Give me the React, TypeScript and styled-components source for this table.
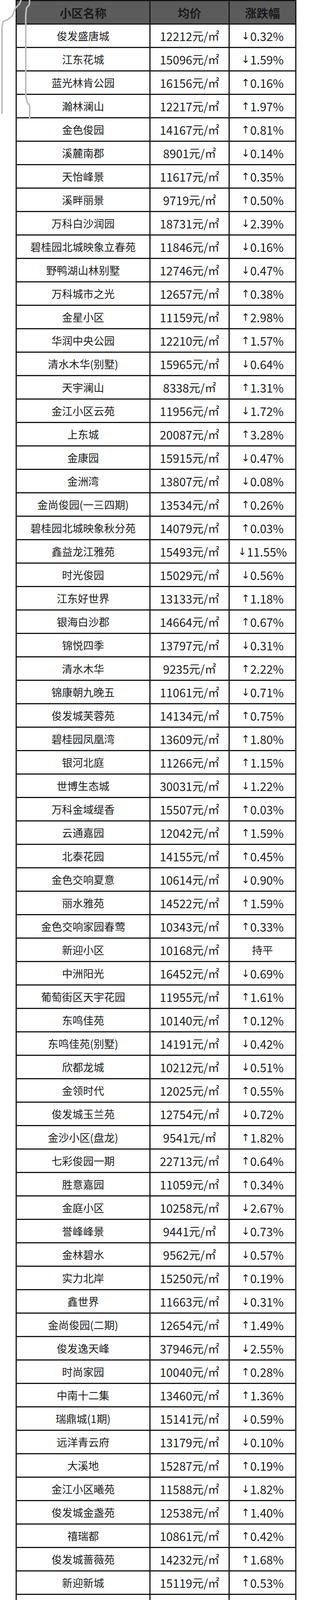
import styled, { createGlobalStyle } from 'styled-components';

const GlobalStyle = createGlobalStyle`
  *, *::before, *::after {
    box-sizing: border-box;
  }
  html, body {
    margin: 0;
    padding: 0;
    background: #ffffff;
  }
  body {
    font-family: "Noto Sans CJK SC", "Noto Sans", sans-serif;
    color: #1c1c1c;
  }
`;

// name, price, change (0 = 持平)
const rows: [string, number, number][] = [
  ['俊发盛唐城', 12212, -0.32],
  ['江东花城', 15096, -1.59],
  ['蓝光林肯公园', 16156, 0.16],
  ['瀚林澜山', 12217, 1.97],
  ['金色俊园', 14167, 0.81],
  ['溪麓南郡', 8901, -0.14],
  ['天怡峰景', 11617, 0.35],
  ['溪畔丽景', 9719, 0.5],
  ['万科白沙润园', 18731, -2.39],
  ['碧桂园北城映象立春苑', 11846, -0.16],
  ['野鸭湖山林别墅', 12746, -0.47],
  ['万科城市之光', 12657, 0.38],
  ['金星小区', 11159, 2.98],
  ['华润中央公园', 12210, 1.57],
  ['清水木华(别墅)', 15965, -0.64],
  ['天宇澜山', 8338, 1.31],
  ['金江小区云苑', 11956, -1.72],
  ['上东城', 20087, 3.28],
  ['金康园', 15915, -0.47],
  ['金洲湾', 13807, -0.08],
  ['金尚俊园(一三四期)', 13534, 0.26],
  ['碧桂园北城映象秋分苑', 14079, 0.03],
  ['鑫益龙江雅苑', 15493, -11.55],
  ['时光俊园', 15029, -0.56],
  ['江东好世界', 13133, 1.18],
  ['银海白沙郡', 14664, 0.67],
  ['锦悦四季', 13797, -0.31],
  ['清水木华', 9235, 2.22],
  ['锦康朝九晚五', 11061, -0.71],
  ['俊发城芙蓉苑', 14134, 0.75],
  ['碧桂园凤凰湾', 13609, 1.8],
  ['银河北庭', 11266, 1.15],
  ['世博生态城', 30031, -1.22],
  ['万科金域缇香', 15507, 0.03],
  ['云通嘉园', 12042, 1.59],
  ['北泰花园', 14155, 0.45],
  ['金色交响夏意', 10614, -0.9],
  ['丽水雅苑', 14522, 1.59],
  ['金色交响家园春莺', 10343, 0.33],
  ['新迎小区', 10168, 0],
  ['中洲阳光', 16452, -0.69],
  ['葡萄街区天宇花园', 11955, 1.61],
  ['东鸣佳苑', 10140, 0.12],
  ['东鸣佳苑(别墅)', 14191, -0.42],
  ['欣都龙城', 10212, -0.51],
  ['金领时代', 12025, 0.55],
  ['俊发城玉兰苑', 12754, -0.72],
  ['金沙小区(盘龙)', 9541, 1.82],
  ['七彩俊园一期', 22713, 0.64],
  ['胜意嘉园', 11059, 0.34],
  ['金庭小区', 10258, -2.67],
  ['誉峰峰景', 9441, -0.73],
  ['金林碧水', 9562, -0.57],
  ['实力北岸', 15250, 0.19],
  ['鑫世界', 11663, -0.31],
  ['金尚俊园(二期)', 12654, 1.49],
  ['俊发逸天峰', 37946, -2.55],
  ['时尚家园', 10040, 0.28],
  ['中南十二集', 13460, 1.36],
  ['瑞鼎城(1期)', 15141, -0.59],
  ['远洋青云府', 13179, -0.1],
  ['大溪地', 15287, 0.19],
  ['金江小区曦苑', 11588, -1.82],
  ['俊发城金盏苑', 12538, 1.4],
  ['禧瑞都', 10861, 0.42],
  ['俊发城蔷薇苑', 14232, 1.68],
  ['新迎新城', 15119, 0.53],
  ['俊发城紫薇苑', 10725, 0.23],
  ['紫东苑', 10887, 2.25],
  ['都市名典', 8636, 0],
  ['恒大翡翠华庭', 9190, -0.51],
  ['山水白沙', 12668, 1.96],
  ['金江小区旭苑', 22049, -3.08],
  ['金昙花园', 10692, -1.12],
  ['龙熙壹号B区', 10708, -0.87],
  ['金色交响家园花语', 10909, 1.96],
  ['俊发城茉莉苑', 14274, 0.1],
  ['融城昆明湖臻园A区', 10503, 1.44],
  ['俊发城百合苑', 11775, 1.66],
  ['茉莉唐朝(别墅)', 18115, 2.34],
  ['金色交响秋恋', 10136, 1.21],
  ['碧桂园璟台', 12415, 2.89],
  ['北辰小区樱花苑', 14996, -0.29],
  ['俊发城郁金苑', 14438, 0.21],
  ['景星花园', 13645, 5.88],
  ['瑞鼎城(2期)', 13987, 0.33],
  ['滨江俊园(2期)', 16350, -0.69],
  ['锦泰花园', 14073, 1.38],
  ['金色交响家园水韵', 11395, 2.61],
  ['紫东尚苑', 10560, 0.59],
  ['江东花园四季园', 14424, -0.49],
  ['金洲湾蓝屿', 15418, 4.95],
  ['山水润城雅园', 10977, 1.83],
  ['佳湖熹祥苑', 17837, 0.57],
  ['华夏园', 14683, 10.43],
  ['中产风尚中心', 16114, -1.19],
  ['江东花园', 11856, 13.4],
  ['清水佳湖雅居', 14631, -2.56],
  ['丽水天锦', 15732, -3.02],
  ['郦岛嘉园', 14653, 1.78],
  ['昆明广场中央(A区)', 22291, 0.98],
  ['博欣盛世', 15703, 0.68],
  ['金江小区涵苑', 22914, 0.09],
  ['佳园小区茶苑', 11551, -0.85],
  ['金安小区', 22448, -0.54],
  ['融城昆明湖澜庭', 11903, -0.13],
  ['凤凰城', 15735, -0.25],
  ['北京路花苑', 12527, 0],
  ['翡翠湾', 22807, 0.74],
  ['巨和美术', 12316, 1.42],
  ['融城昆明湖', 13158, 1.88],
  ['金江小区熙苑', 19036, 0],
  ['金利园', 14437, 3.52],
  ['北辰小区茶花苑', 15494, -0.15],
  ['昆明广场中央(B区)', 19164, -0.91],
  ['美的顺城府(1期)', 16468, 1.72],
  ['云南映象(C区)', 12640, 1.82],
  ['金江小区融苑', 17088, 1.87],
  ['实力上筑', 12387, -8.53],
  ['万宏国际(1期)', 13723, -1.88],
  ['北辰小区杜鹃苑', 14243, -0.11],
  ['中梁首府', 10444, -2.86],
  ['融城昆明湖七里香', 11148, 0.96],
  ['金禧园', 13294, -2.08],
  ['蓝光雍锦世家', 20200, 2.61],
];

const Page = styled.div`
  position: relative;
  width: 800px;
  padding: 0 0 46px 40px;
`;

const Table = styled.div`
  width: 720px;
  display: grid;
  grid-template-columns: 343px 203px 1fr;
  grid-auto-rows: 60px;
  border: 3px solid #151515;
`;

const Cell = styled.div<{ $last?: boolean; $bottom?: boolean }>`
  display: flex;
  align-items: center;
  justify-content: center;
  overflow: hidden;
  border-right: ${(p) => (p.$last ? 'none' : '3px solid #151515')};
  border-bottom: ${(p) => (p.$bottom ? 'none' : '3px solid #151515')};
  font-size: 27px;
  line-height: 1;
  white-space: nowrap;
  color: #1c1c1c;
`;

const HeadCell = styled(Cell)`
  background: #5b5b5b;
  font-size: 30px;
  font-weight: 700;
  color: #1a1a1a;
`;

const Num = styled.span`
  font-size: 30px;
`;

const Unit = styled.span`
  font-size: 29px;
`;

const Arrow = styled.span`
  font-family: "DejaVu Sans", sans-serif;
  font-size: 26px;
  margin-right: 1px;
`;

const Overlay = styled.svg`
  position: absolute;
  left: 0;
  top: 0;
  pointer-events: none;
`;

const ScrollMark = styled.div`
  position: absolute;
  left: 0;
  bottom: 0;
  width: 8px;
  height: 124px;
  border-radius: 0 4px 0 0;
  background: #d6d6d6;
`;

const fmtChange = (v: number) => {
  if (v === 0) return <>持平</>;
  return (
    <>
      <Arrow>{v > 0 ? '↑' : '↓'}</Arrow>
      <Num>{Math.abs(v).toFixed(2)}%</Num>
    </>
  );
};

export default function App() {
  return (
    <>
      <GlobalStyle />
      <Page>
        <Table>
          <HeadCell>小区名称</HeadCell>
          <HeadCell>均价</HeadCell>
          <HeadCell $last>涨跌幅</HeadCell>
          {rows.map(([name, price, change], i) => {
            const bottom = i === rows.length - 1;
            return [
              <Cell key={`n${i}`} $bottom={bottom}>
                {name}
              </Cell>,
              <Cell key={`p${i}`} $bottom={bottom}>
                <Num>{price}</Num>
                <Unit>元/㎡</Unit>
              </Cell>,
              <Cell key={`c${i}`} $last $bottom={bottom}>
                {fmtChange(change)}
              </Cell>,
            ];
          })}
        </Table>

        <Overlay width="800" height="7000" viewBox="0 0 800 7000">
          <g fill="none" stroke="#bdbdbd" strokeWidth="4" strokeLinecap="round" strokeLinejoin="round">
            <path d="M54 0 L50 10 L40 20 L32 40 L20 50 L8 55 L5 70 L5 290" />
            <path d="M76 0 L75 12 L68 20 L66 40 L66 245 L70 262 L76 270 L76 302" />
            <path d="M69 6482 L62 6510 L51 6541 L38 6560 L22 6594 L16 6620 L8 6640 L5 6659 L5 6847" />
          </g>
        </Overlay>
        <ScrollMark />
      </Page>
    </>
  );
}
